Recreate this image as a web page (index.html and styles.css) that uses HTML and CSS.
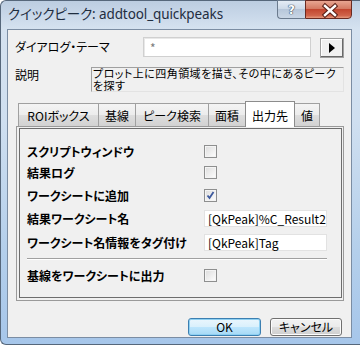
FILE: index.html
```html
<!DOCTYPE html>
<html lang="ja">
<head>
    <meta charset="UTF-8">
    <meta name="viewport" content="width=device-width, initial-scale=1.0">
    <title>クイックピーク</title>
    <link rel="stylesheet" href="styles.css">
</head>
<body>

<div class="window">
    <div class="titlebar">
        <span class="title">クイックピーク: addtool_quickpeaks</span>
        <div class="caption-buttons">
            <div class="cap-btn help">?</div>
            <div class="cap-btn close">
                <svg width="47" height="19" viewBox="0 0 47 19">
                    <path d="M20 6 L30 15 M30 6 L20 15" stroke="#5b2118" stroke-width="4.5" stroke-linecap="square"/>
                    <path d="M20 6 L30 15 M30 6 L20 15" stroke="#fff" stroke-width="2.4" stroke-linecap="square"/>
                </svg>
            </div>
        </div>
    </div>

    <div class="client">
        <!-- テーマ -->
        <div class="theme-row">
            <span class="label theme-label">ダイアログ・テーマ</span>
            <div class="theme-box">*</div>
            <div class="arrow-btn">
                <svg width="8" height="10" viewBox="0 0 8 10"><path d="M1 0 L7 5 L1 10 Z" fill="#000"/></svg>
            </div>
        </div>

        <!-- 説明 -->
        <div class="desc-row">
            <span class="label desc-label">説明</span>
            <div class="desc-box">
                <div class="desc-line">プロット上に四角領域を描き、その中にあるピーク</div>
                <div class="desc-line">を探す</div>
            </div>
        </div>

        <!-- タブ -->
        <div class="tabs">
            <div class="tab tab-roi">ROIボックス</div>
            <div class="tab tab-base">基線</div>
            <div class="tab tab-find">ピーク検索</div>
            <div class="tab tab-area">面積</div>
            <div class="tab tab-out active">出力先</div>
            <div class="tab tab-val">値</div>
        </div>

        <div class="panel">
            <div class="panel-inner">
                <div class="opt-row r1">
                    <span class="opt-label">スクリプトウィンドウ</span>
                    <span class="checkbox"></span>
                </div>
                <div class="opt-row r2">
                    <span class="opt-label">結果ログ</span>
                    <span class="checkbox"></span>
                </div>
                <div class="opt-row r3">
                    <span class="opt-label">ワークシートに追加</span>
                    <span class="checkbox checked">
                        <svg width="11" height="11" viewBox="0 0 11 11"><path d="M2.5 5.5 L4.5 8 L8.5 2" stroke="#3e5a9e" stroke-width="1.8" fill="none"/></svg>
                    </span>
                </div>
                <div class="opt-row r4">
                    <span class="opt-label">結果ワークシート名</span>
                    <div class="text-input">[QkPeak]%C_Result2</div>
                </div>
                <div class="opt-row r5">
                    <span class="opt-label">ワークシート名情報をタグ付け</span>
                    <div class="text-input">[QkPeak]Tag</div>
                </div>
                <div class="separator"></div>
                <div class="opt-row r6">
                    <span class="opt-label">基線をワークシートに出力</span>
                    <span class="checkbox"></span>
                </div>
            </div>
        </div>

        <div class="buttons">
            <div class="btn btn-ok">OK</div>
            <div class="btn btn-cancel">キャンセル</div>
        </div>
    </div>
</div>

</body>
</html>
```

FILE: styles.css
```css
body {
    margin: 0;
    background-color: #fff;
    color: #000;
    font-family: "Noto Sans CJK JP", sans-serif;
    font-size: 12px;
    font-feature-settings: "palt";
}

/* ウィンドウ枠 */
.window {
    width: 360px;
    height: 345px;
    box-sizing: border-box;
    display: flex;
    flex-direction: column;
    padding: 0 8px 6px 6px;
    border: 1px solid #56677b;
    border-right: none;
    border-radius: 6px 0 0 6px;
    background: linear-gradient(#bccde1 0, #d5e2f0 28px, #cfdff0 120px, #b4cfeb 250px, #a6c6ea 345px);
}

.titlebar {
    height: 28px;
    display: flex;
    justify-content: space-between;
    align-items: flex-start;
}

.title {
    margin: 4px 0 0 1px;
    font-family: "Noto Sans", "Noto Sans CJK JP", sans-serif;
    font-size: 13.5px;
    line-height: 18px;
    color: #1f2d3f;
    letter-spacing: -0.1px;
}

.caption-buttons {
    display: flex;
    margin-top: -1px;
}

.cap-btn {
    height: 19px;
    box-sizing: border-box;
    display: flex;
    justify-content: center;
    align-items: center;
}

.help {
    width: 28px;
    border: 1px solid #6b7b8e;
    border-right: none;
    border-radius: 0 0 0 4px;
    background: linear-gradient(#e4ecf5, #cbd8e7 50%, #b7c7da 50%, #c9d6e5);
    color: #fff;
    font-family: "DejaVu Sans", sans-serif;
    font-weight: bold;
    font-size: 12px;
    text-shadow: 0 0 1px #33475e, 0 0 1px #33475e, 0 0 1px #33475e;
}

.close {
    width: 47px;
    border: 1px solid #6a2a21;
    border-radius: 0 0 4px 0;
    background: linear-gradient(#e8a591, #d47a63 45%, #c2462f 50%, #d0634a 85%, #e59a7e);
}

.close svg {
    display: block;
    margin: -1px;
}

/* クライアント領域 */
.client {
    flex: 1;
    display: flex;
    flex-direction: column;
    background-color: #f0f0f0;
    border: 1px solid #7b8da3;
    padding: 7px 7px 0 7px;
}

.label {
    line-height: 14px;
}

.theme-row {
    display: flex;
    align-items: center;
    height: 20px;
}

.theme-label {
    width: 128px;
}

.theme-box {
    width: 168px;
    height: 20px;
    box-sizing: border-box;
    background-color: #fff;
    border: 1px solid #d0d0d0;
    box-shadow: inset 1px 1px 0 #e8e8e8;
    color: #7a7a7a;
    padding-left: 6px;
    line-height: 19px;
}

.arrow-btn {
    width: 24px;
    height: 20px;
    margin-left: 9px;
    margin-top: 2px;
    box-sizing: border-box;
    border: 1px solid #a0a0a0;
    box-shadow: inset -1px -1px 0 #696969, inset 1px 1px 0 #fff;
    background-color: #f0f0f0;
    display: flex;
    justify-content: center;
    align-items: center;
}

.desc-row {
    display: flex;
    margin-top: 10px;
}

.desc-label {
    width: 76px;
    padding-top: 1px;
}

.desc-box {
    flex: 1;
    height: 25px;
    box-sizing: border-box;
    border: 1px solid;
    border-color: #a0a0a0 #e3e3e3 #e3e3e3 #a0a0a0;
    padding: 0 0 0 1px;
    display: flex;
    flex-direction: column;
}

.desc-line {
    height: 11.5px;
    line-height: 11.5px;
    font-size: 11px;
    letter-spacing: 0.45px;
    white-space: nowrap;
}

/* タブ */
.tabs {
    display: flex;
    align-items: flex-end;
    height: 25px;
    margin-top: 9px;
    padding-left: 3px;
}

.tab {
    height: 23px;
    box-sizing: border-box;
    border: 1px solid #a0a0a0;
    border-bottom: none;
    margin-right: -1px;
    background: linear-gradient(#f4f4f4, #ececec 50%, #dedede 50%, #d2d2d2);
    display: flex;
    justify-content: center;
    align-items: center;
}

.tab.active {
    height: 26px;
    margin-bottom: -1px;
    background: #fff;
    border-color: #8c8c8c;
    position: relative;
    z-index: 1;
    padding-top: 1px;
}

.tab-roi { width: 81px; }
.tab-base { width: 38px; }
.tab-find { width: 74px; }
.tab-area { width: 38px; }
.tab-out { width: 50px; }
.tab-val { width: 26px; }

.panel {
    height: 175px;
    box-sizing: border-box;
    margin-left: 1px;
    border: 1px solid #9a9a9a;
    padding: 1px 1px 2px 2px;
    display: flex;
}

.panel-inner {
    flex: 1;
    border: 1px solid #6d6d6d;
    padding: 12px 14px 0 7px;
    display: flex;
    flex-direction: column;
}

.opt-row {
    display: flex;
    align-items: center;
}

.r1 { height: 21px; }
.r2 { height: 21px; }
.r3 { height: 24px; }
.r4 { height: 23px; }
.r5 { height: 25px; }
.r6 { height: 22px; }

.opt-label {
    width: 177px;
    font-weight: bold;
    white-space: nowrap;
}

.checkbox {
    width: 13px;
    height: 13px;
    box-sizing: border-box;
    border: 1px solid #8e8f8f;
    background: linear-gradient(135deg, #dcdcdc, #f4f4f4 70%, #fff);
    box-shadow: inset 0 0 0 1px #f4f4f4;
    display: flex;
    justify-content: center;
    align-items: center;
}

.text-input {
    flex: 1;
    height: 17px;
    box-sizing: border-box;
    background-color: #fff;
    border: 1px solid #e2e2e2;
    padding-left: 3px;
    line-height: 15px;
    white-space: nowrap;
}

.separator {
    height: 1px;
    margin: 3px 0 4px 0;
    background-color: #a0a0a0;
    border-bottom: 1px solid #fff;
}

/* ボタン */
.buttons {
    display: flex;
    justify-content: flex-end;
    gap: 9px;
    margin-top: 17px;
    padding-right: 2px;
}

.btn {
    height: 18px;
    box-sizing: border-box;
    border-radius: 3px;
    display: flex;
    justify-content: center;
    align-items: center;
    line-height: 14px;
}

.btn-ok {
    width: 73px;
    border: 1px solid #3c7fb1;
    background: linear-gradient(#eaf6fd, #d9f0fc 50%, #bee6fd 50%, #a7d9f5);
    box-shadow: inset 0 0 0 1px #8ed0f2;
}

.btn-cancel {
    width: 72px;
    border: 1px solid #707070;
    background: linear-gradient(#f2f2f2, #ebebeb 50%, #dddddd 50%, #cfcfcf);
    box-shadow: inset 0 0 0 1px #fcfcfc;
}
```
